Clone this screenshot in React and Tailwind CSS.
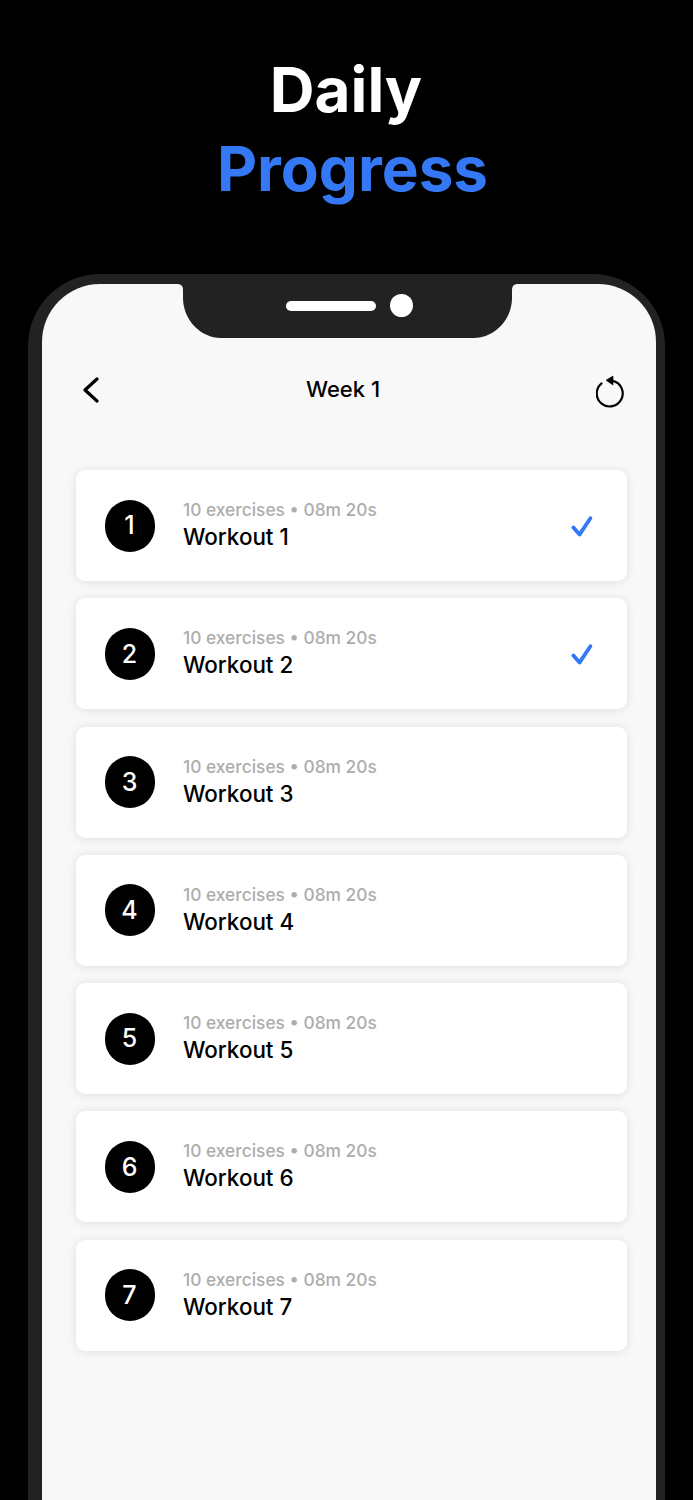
const workouts = [1, 2, 3, 4, 5, 6, 7];
const done = [1, 2];

const WorkoutCard = ({ n }) => (
  <div className="flex h-[111px] items-center rounded-[9px] bg-white pl-[28.5px] pr-[33px] shadow-[0_1px_10px_rgba(0,0,0,0.11)]">
    <div className="flex h-[52px] w-[50px] shrink-0 items-center justify-center rounded-full bg-black pt-[1px] text-[25px] font-medium text-white">
      {n}
    </div>
    <div className="ml-[28.5px] flex-1 pb-[2px]">
      <p className="text-[17.35px] leading-[24px] font-medium text-[#adadad]">10 exercises • 08m 20s</p>
      <p className="text-[22.4px] leading-[29px] font-medium text-black">Workout {n}</p>
    </div>
    {done.includes(n) && (
      <svg width="24" height="24" viewBox="0 0 24 24" fill="none" stroke="#3478f6" strokeWidth="3.8" strokeLinecap="round" strokeLinejoin="round">
        <path d="M3.4 13.4 L9.5 20.6 L20.4 4.2" />
      </svg>
    )}
  </div>
);

export default function App() {
  return (
    <div className="h-[1500px] overflow-hidden bg-black font-['Inter',sans-serif]">
      <h1 className="pt-[50px] text-center text-[62px] leading-[79px] font-bold">
        <span className="block pr-[1px] text-white">Daily</span>
        <span className="block pl-[12px] text-[#3478f6]">Progress</span>
      </h1>

      {/* Phone */}
      <div className="mx-[28px] mt-[66px] h-[1300px] rounded-t-[72px] bg-[#222222] px-[14px] pr-[9px] pt-[10px]">
        <div className="relative h-full rounded-t-[58px] bg-[#f8f8f8] px-[34px] pr-[29px]">
          {/* Notch */}
          <svg className="absolute left-[141px] top-0 overflow-visible" width="329" height="54" viewBox="0 0 329 54" fill="#222222">
            <path d="M-6 0 H335 C331 0 329 2 329 6 V14 C329 36 311 54 291 54 H38 C18 54 0 36 0 14 V6 C0 2 -2 0 -6 0 Z" />
          </svg>
          <div className="absolute left-[244px] top-[17px] h-[10px] w-[90px] rounded-full bg-white" />
          <div className="absolute left-[348px] top-[10px] h-[23px] w-[23px] rounded-full bg-white" />

          {/* Header */}
          <div className="flex h-[186px] items-start justify-between pt-[91px]">
            <svg className="ml-[6px] mt-[2px]" width="20" height="26" viewBox="0 0 20 26" fill="none" stroke="#000000" strokeWidth="3.2" strokeLinecap="round" strokeLinejoin="round">
              <path d="M15 2 L3 13 L15 24" />
            </svg>
            <p className="mr-[12px] text-[22px] leading-[28px] font-medium text-black">Week 1</p>
            <svg className="mr-[1px]" width="30" height="34" viewBox="0 0 30 34" fill="none">
              <path d="M17 5.9 A13 13 0 1 1 5.5 8.4" stroke="#000000" strokeWidth="2.2" strokeLinecap="round" />
              <path d="M10 5.2 L17 1 V10 Z" fill="#000000" stroke="#000000" strokeWidth="0.6" strokeLinejoin="round" />
            </svg>
          </div>

          {/* Workout list */}
          <div className="flex flex-col gap-[17.25px]">
            {workouts.map((n) => (
              <WorkoutCard key={n} n={n} />
            ))}
          </div>
        </div>
      </div>
    </div>
  );
}
